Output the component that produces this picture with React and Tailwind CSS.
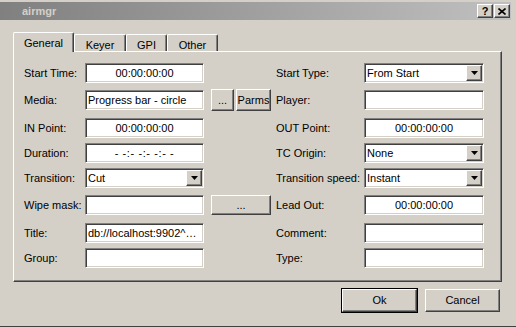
import React from 'react';

const sunken =
  'border border-t-[#808080] border-l-[#808080] border-b-white border-r-white bg-white shadow-[inset_1px_1px_0_#404040,inset_-1px_-1px_0_#d4d0c8]';
const raised =
  'border border-t-white border-l-white border-b-[#404040] border-r-[#404040] bg-[#d4d0c8] shadow-[inset_-1px_-1px_0_#808080]';

function Field({ value = '', center = false, width = 'w-[119px]', extra = '' }) {
  return (
    <div className={`${sunken} ${width} flex h-[20px] shrink-0 items-center overflow-hidden whitespace-nowrap px-[2px] ${center ? 'justify-center' : ''} ${extra}`}>
      {value}
    </div>
  );
}

function Select({ value, width = 'w-[119px]' }) {
  return (
    <div className={`${sunken} ${width} flex h-[20px] shrink-0 items-center justify-between pl-[2px] pr-[1px]`}>
      <span className="whitespace-nowrap">{value}</span>
      <div className={`${raised} grid h-[16px] w-[16px] place-items-center`}>
        <svg width="7" height="4" viewBox="0 0 7 4">
          <path d="M0 0h7L3.5 4z" fill="#000" />
        </svg>
      </div>
    </div>
  );
}

function Button({ children, className = '' }) {
  return <div className={`${raised} grid shrink-0 place-items-center ${className}`}>{children}</div>;
}

function Row({ left, right, className = '', height = 'h-[20px]' }) {
  return (
    <div className={`flex items-center ${height} ${className}`}>
      <div className="flex w-[252px] shrink-0 items-center">{left}</div>
      <div className="flex items-center">{right}</div>
    </div>
  );
}

const L = ({ children }) => <span className="w-[61px] shrink-0 whitespace-nowrap">{children}</span>;
const R = ({ children }) => <span className="w-[88px] shrink-0 whitespace-nowrap">{children}</span>;

export default function App() {
  const tabs = [
    { name: 'General', w: 'w-[61px]' },
    { name: 'Keyer', w: 'w-[52px]' },
    { name: 'GPI', w: 'w-[41px]' },
    { name: 'Other', w: 'w-[51px]' }
  ];

  return (
    <div
      className="relative h-[327px] w-[516px] overflow-hidden border-b border-b-[#404040] bg-[#d4d0c8] text-[11px] leading-none text-black"
      style={{ fontFamily: '"Liberation Sans", Arial, sans-serif' }}
    >
      {/* title bar */}
      <div className="mt-[2px] flex h-[18px] w-[511px] items-center justify-between bg-gradient-to-r from-[#808080] to-[#c0c0c0] pl-[22px] pr-[1px]">
        <span className="font-bold text-[#d4d0c8]">airmgr</span>
        <div className="flex gap-[1px]">
          <Button className="h-[14px] w-[16px] text-[11px] font-bold">?</Button>
          <Button className="h-[14px] w-[16px]">
            <svg width="8" height="7" viewBox="0 0 8 7">
              <path d="M0.5 0.5l7 6M7.5 0.5l-7 6" stroke="#000" strokeWidth="1.6" />
            </svg>
          </Button>
        </div>
      </div>

      {/* tabs */}
      <div className="ml-[13px] mt-[12px] flex h-[19px] items-end">
        {tabs.map((tab, i) =>
          i === 0 ? (
            <div
              key={tab.name}
              className={`relative z-10 -mb-[1px] flex h-[20px] ${tab.w} items-start justify-center rounded-t-[2px] border border-b-0 border-t-white border-l-white border-r-[#404040] bg-[#d4d0c8] pt-[5px] shadow-[inset_-1px_0_0_#808080]`}
            >
              {tab.name}
            </div>
          ) : (
            <div
              key={tab.name}
              className={`flex h-[17px] ${tab.w} items-start justify-center rounded-t-[2px] border border-b-0 border-t-white border-l-white border-r-[#404040] pt-[5px] shadow-[inset_-1px_0_0_#808080]`}
            >
              {tab.name}
            </div>
          )
        )}
      </div>

      {/* tab panel */}
      <div className="ml-[13px] h-[231px] w-[489px] border border-t-white border-l-white border-b-[#404040] border-r-[#404040] pl-[10px] pt-[11px] shadow-[inset_-1px_-1px_0_#808080]">
        <Row
          left={<><L>Start Time:</L><Field value="00:00:00:00" center /></>}
          right={<><R>Start Type:</R><Select value="From Start" width="w-[120px]" /></>}
        />
        <Row
          height="h-[22px]"
          className="mt-[6px]"
          left={
            <>
              <L>Media:</L>
              <Field value="Progress bar - circle" />
              <Button className="ml-[7px] h-[22px] w-[23px]">...</Button>
              <Button className="ml-[2px] h-[22px] w-[35px]">Parms</Button>
            </>
          }
          right={<><R>Player:</R><Field width="w-[120px]" /></>}
        />
        <Row
          className="mt-[7px]"
          left={<><L>IN Point:</L><Field value="00:00:00:00" center /></>}
          right={<><R>OUT Point:</R><Field value="00:00:00:00" center width="w-[120px]" /></>}
        />
        <Row
          className="mt-[5px]"
          left={<><L>Duration:</L><Field value="- -:- -:- -:- -" center extra="tracking-[0.6px]" /></>}
          right={<><R>TC Origin:</R><Select value="None" width="w-[120px]" /></>}
        />
        <Row
          className="mt-[5px]"
          left={<><L>Transition:</L><Select value="Cut" /></>}
          right={<><R>Transition speed:</R><Select value="Instant" width="w-[120px]" /></>}
        />
        <Row
          className="mt-[7px]"
          left={
            <>
              <L>Wipe mask:</L>
              <Field />
              <Button className="ml-[7px] h-[20px] w-[60px]">...</Button>
            </>
          }
          right={<><R>Lead Out:</R><Field value="00:00:00:00" center width="w-[120px]" /></>}
        />
        <Row
          className="mt-[8px]"
          left={<><L>Title:</L><Field value="db://localhost:9902^…" /></>}
          right={<><R>Comment:</R><Field width="w-[120px]" /></>}
        />
        <Row
          className="mt-[5px]"
          left={<><L>Group:</L><Field /></>}
          right={<><R>Type:</R><Field width="w-[120px]" /></>}
        />
      </div>

      {/* dialog buttons */}
      <div className="mt-[6px] flex items-center justify-end gap-[7px] pr-[16px]">
        <div className="border border-black">
          <Button className="h-[23px] w-[75px]">Ok</Button>
        </div>
        <Button className="h-[23px] w-[75px]">Cancel</Button>
      </div>
    </div>
  );
}
